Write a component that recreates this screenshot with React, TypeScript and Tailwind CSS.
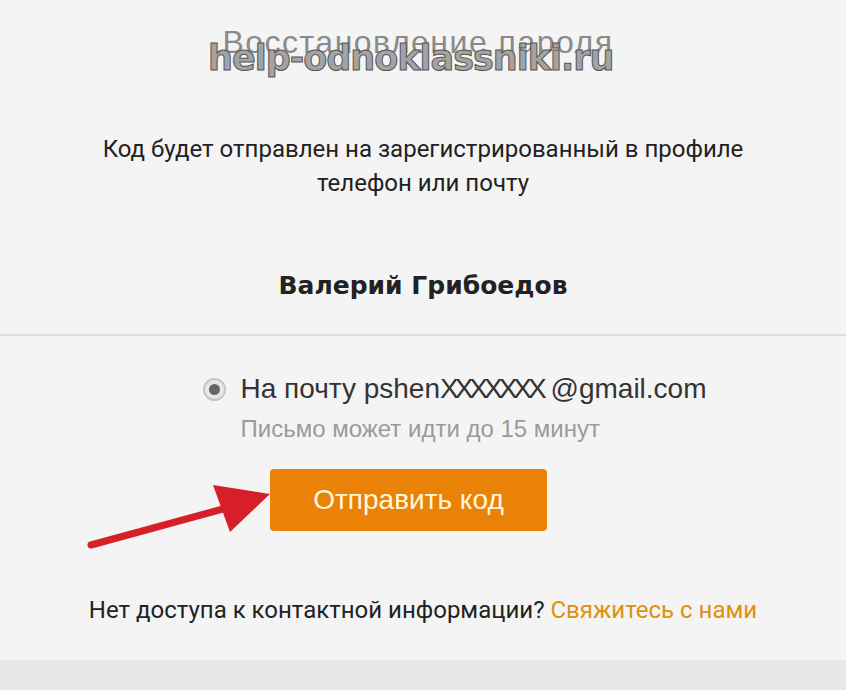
export default function App() {
  return (
    <div className="relative w-[846px] h-[690px] overflow-hidden bg-[#f5f4f4] font-['Liberation_Sans',sans-serif]">
      <div className="flex flex-col items-center pt-[22px]">
        <h1 className="mr-[10px] text-[32px] leading-[40px] tracking-[1.5px] text-[#8a8a8a] font-normal">Восстановление пароля</h1>
        <p className="mt-[70px] text-center font-['Roboto',sans-serif] text-[24px] leading-[34px] text-[#222]">
          Код будет отправлен на зарегистрированный в профиле
          <br />
          телефон или почту
        </p>
        <div className="mt-[71px] font-['DejaVu_Sans',sans-serif] font-bold text-[25px] text-[#222] leading-[30px]">
          Валерий Грибоедов
        </div>
      </div>

      <div className="mt-[33px] h-[2px] bg-[#dedede]" />

      <div className="flex flex-col items-center">
        <div className="mt-[35px] flex flex-col pl-[64px]">
          <div className="flex items-center gap-[14px]">
            <span className="flex items-center justify-center w-[23px] h-[23px] rounded-full border-2 border-[#c6c6c6] bg-[#e8e8e8]">
              <span className="w-[11px] h-[11px] rounded-full bg-[#666]" />
            </span>
            <span className="text-[28px] leading-[36px] text-[#333]">
              На почту pshen<span className="tracking-[-4px]">XXXXXXX</span>&nbsp;@gmail.com
            </span>
          </div>
          <div className="ml-[37px] mt-[8px] text-[24px] leading-[28px] text-[#9a9a9a]">Письмо может идти до 15 минут</div>
        </div>

        <button className="mt-[26px] mr-[29px] w-[277px] h-[62px] rounded-[4px] bg-[#eb8208] text-[#fff7dc] text-[28px] font-['Liberation_Sans',sans-serif]">
          Отправить код
        </button>

        <p className="mt-[64px] font-['Roboto',sans-serif] text-[24px] leading-[30px] text-[#222]">
          Нет доступа к контактной информации? <span className="text-[#e0900a]">Свяжитесь с нами</span>
        </p>
      </div>

      <div className="absolute left-0 right-0 bottom-0 h-[30px] bg-[#e7e7e7]" />

      {/* watermark over the title */}
      <div
        className="absolute left-[208px] top-[38px] text-[35px] leading-[40px] font-bold text-[#a3a3a3] font-['DejaVu_Sans',sans-serif] tracking-[-1px]"
        style={{ WebkitTextStroke: '1px #555' }}
      >
        help-odnoklassniki.ru
      </div>

      {/* red arrow */}
      <svg className="absolute left-[80px] top-[472px]" width="200" height="80" viewBox="0 0 200 80">
        <line x1="11" y1="73" x2="150" y2="35" stroke="#d71f2a" strokeWidth="7" strokeLinecap="round" />
        <polygon points="133,13 190,22 150,60" fill="#d71f2a" />
      </svg>
    </div>
  );
}
